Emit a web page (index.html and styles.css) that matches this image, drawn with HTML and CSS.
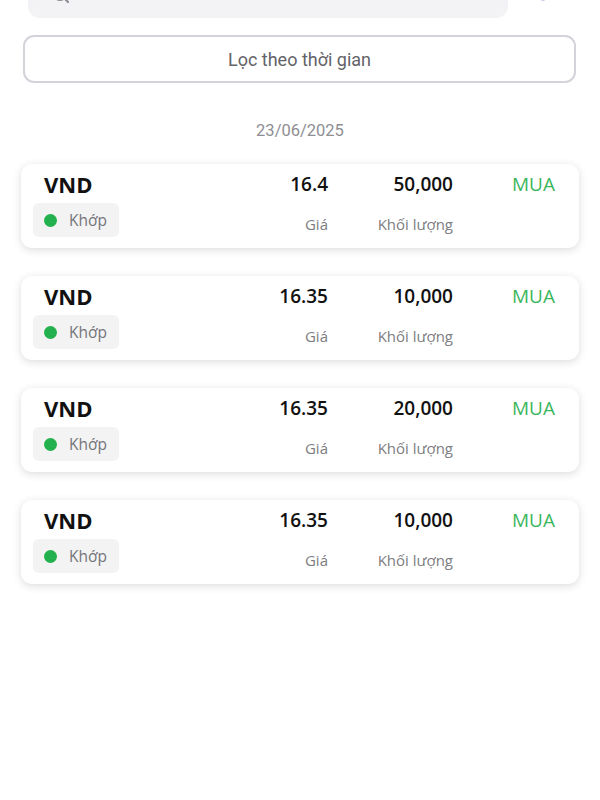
FILE: index.html
```html
<!DOCTYPE html>
<html lang="vi">
<head>
    <meta charset="UTF-8">
    <meta name="viewport" content="width=device-width, initial-scale=1.0">
    <title>Lịch sử lệnh</title>
    <link rel="stylesheet" href="styles.css">
</head>
<body>
    <div class="page">
        <div class="topbar">
            <div class="search">
                <svg class="search-icon" width="18" height="18" viewBox="0 0 18 18">
                    <circle cx="8" cy="8" r="6" fill="none" stroke="#8a8a92" stroke-width="2"/>
                    <line x1="12.5" y1="12.5" x2="16" y2="16" stroke="#8a8a92" stroke-width="2" stroke-linecap="round"/>
                </svg>
            </div>
            <svg class="filter-icon" width="20" height="20" viewBox="0 0 20 20">
                <path d="M3 4h14M6 10h8M9 16h2" stroke="#3b3fb5" stroke-width="2.4" stroke-linecap="round"/>
            </svg>
        </div>

        <button class="time-filter">Lọc theo thời gian</button>

        <div class="date">23/06/2025</div>

        <div class="orders">
            <div class="order">
                <div class="symbol">VND</div>
                <div class="num">16.4</div>
                <div class="num">50,000</div>
                <div class="side">MUA</div>
                <div class="state"><span class="dot"></span>Khớp</div>
                <div class="label">Giá</div>
                <div class="label">Khối lượng</div>
                <div></div>
            </div>
            <div class="order">
                <div class="symbol">VND</div>
                <div class="num">16.35</div>
                <div class="num">10,000</div>
                <div class="side">MUA</div>
                <div class="state"><span class="dot"></span>Khớp</div>
                <div class="label">Giá</div>
                <div class="label">Khối lượng</div>
                <div></div>
            </div>
            <div class="order">
                <div class="symbol">VND</div>
                <div class="num">16.35</div>
                <div class="num">20,000</div>
                <div class="side">MUA</div>
                <div class="state"><span class="dot"></span>Khớp</div>
                <div class="label">Giá</div>
                <div class="label">Khối lượng</div>
                <div></div>
            </div>
            <div class="order">
                <div class="symbol">VND</div>
                <div class="num">16.35</div>
                <div class="num">10,000</div>
                <div class="side">MUA</div>
                <div class="state"><span class="dot"></span>Khớp</div>
                <div class="label">Giá</div>
                <div class="label">Khối lượng</div>
                <div></div>
            </div>
        </div>
    </div>
</body>
</html>
```

FILE: styles.css
```css
body {
    margin: 0;
    background-color: #ffffff;
    font-family: "Open Sans", "Noto Sans", sans-serif;
    color: #111111;
}
.page {
    padding: 0 21px 40px;
}
.topbar {
    display: flex;
    align-items: flex-end;
    height: 18px;
    overflow: hidden;
}
.search {
    flex: 0 0 480px;
    height: 44px;
    margin-left: 7px;
    border-radius: 12px;
    background-color: #f3f3f6;
    position: relative;
}
.search-icon {
    position: absolute;
    left: 24px;
    top: 12px;
}
.filter-icon {
    margin-left: 25px;
    margin-bottom: 15px;
}
.time-filter {
    display: block;
    box-sizing: border-box;
    width: 553px;
    height: 48px;
    margin: 17px 0 0 2px;
    border: 2px solid #d3d3da;
    border-radius: 11px;
    background-color: #ffffff;
    font-family: Roboto, "Liberation Sans", sans-serif;
    font-size: 18px;
    color: #636368;
}
.date {
    margin-top: 38px;
    text-align: center;
    font-family: Roboto, "Liberation Sans", sans-serif;
    font-size: 16.5px;
    line-height: 20px;
    color: #8e8e93;
}
.orders {
    display: flex;
    flex-direction: column;
    gap: 28px;
    margin-top: 23px;
}
.order {
    display: grid;
    grid-template-columns: 1fr 110px 125px 102px;
    grid-template-rows: 30px 34px;
    row-gap: 4px;
    padding: 5px 24px 11px 12px;
    border-radius: 11px;
    background-color: #ffffff;
    box-shadow: 0 2px 8px rgba(0, 0, 0, 0.14);
}
.symbol {
    margin-left: 11px;
    font-size: 22px;
    font-weight: 700;
    line-height: 30px;
}
.num {
    text-align: right;
    font-size: 19px;
    font-weight: 600;
    line-height: 30px;
}
.side {
    text-align: right;
    font-size: 19px;
    line-height: 30px;
    color: #3cb55b;
}
.state {
    display: flex;
    align-items: center;
    justify-self: start;
    gap: 12px;
    padding: 0 12px 0 11px;
    border-radius: 6px;
    background-color: #f3f3f4;
    font-size: 15.5px;
    color: #76767a;
}
.dot {
    width: 13px;
    height: 13px;
    border-radius: 50%;
    background-color: #22b14c;
}
.label {
    align-self: end;
    margin-bottom: 2px;
    text-align: right;
    font-size: 15px;
    line-height: 22px;
    color: #7d7d82;
}
```
